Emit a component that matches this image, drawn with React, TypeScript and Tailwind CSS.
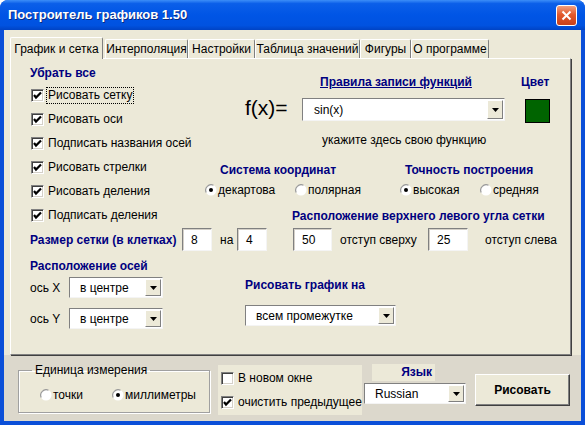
import React from "react";

const font = "font-['Liberation_Sans',Arial,sans-serif]";

function CheckBox({ label, checked, focus }: { label: string; checked?: boolean; focus?: boolean }) {
  return (
    <div className="flex items-center h-[24px] text-[12px] text-black whitespace-nowrap">
      <span className="w-[13px] h-[13px] bg-white border border-t-[#808080] border-l-[#808080] border-r-white border-b-white shadow-[inset_1px_1px_0_#404040,inset_-1px_-1px_0_#d4d0c8] flex items-center justify-center shrink-0">
        {checked && (
          <svg width="9" height="9" viewBox="0 0 9 9">
            <path d="M1 4 L3 6.5 L8 1.5" stroke="#000" strokeWidth="2.2" fill="none" />
          </svg>
        )}
      </span>
      <span className={`ml-[2px] leading-[15px] px-[1px] ${focus ? "border border-dotted border-black" : "border border-transparent"}`}>
        {label}
      </span>
    </div>
  );
}

function Radio({ label, checked, w }: { label: string; checked?: boolean; w: string }) {
  return (
    <div className={`flex items-center h-[16px] text-[12px] whitespace-nowrap ${w}`}>
      <svg width="12" height="12" viewBox="0 0 12 12" className="shrink-0">
        <circle cx="6" cy="6" r="5.5" fill="#fff" />
        <path d="M1.2 8.5 A5.5 5.5 0 0 1 8.5 1.2" stroke="#9a9a9a" strokeWidth="1.2" fill="none" />
        {checked && <circle cx="6" cy="6" r="2" fill="#000" />}
      </svg>
      <span className="ml-[1px]">{label}</span>
    </div>
  );
}

function Field({ value, w }: { value: string; w: string }) {
  return (
    <div className={`h-[23px] ${w} bg-white border border-t-[#808080] border-l-[#808080] border-r-[#f4f4f4] border-b-[#f4f4f4] shadow-[inset_1px_1px_0_#d4d0c8] flex items-center pl-[8px] text-[12px]`}>
      {value}
    </div>
  );
}

function Combo({ value, w, h = "h-[21px]", pl = "pl-[10px]" }: { value: string; w: string; h?: string; pl?: string }) {
  return (
    <div className={`${h} ${w} bg-white border border-t-[#808080] border-l-[#808080] border-r-[#f4f4f4] border-b-[#f4f4f4] flex items-stretch text-[12px]`}>
      <div className={`flex-1 flex items-center whitespace-nowrap ${pl}`}>{value}</div>
      <div className="w-[16px] m-[1px] bg-[#ece9d8] border border-t-white border-l-white border-r-[#808080] border-b-[#808080] flex items-center justify-center">
        <svg width="7" height="4" viewBox="0 0 7 4">
          <path d="M0 0 H7 L3.5 4 Z" fill="#000" />
        </svg>
      </div>
    </div>
  );
}

function Heading({ children, className = "" }: { children: React.ReactNode; className?: string }) {
  return <div className={`h-[16px] leading-[16px] text-[12px] font-bold text-[#000080] whitespace-nowrap ${className}`}>{children}</div>;
}

const tabs = [
  { label: "График и сетка", w: "w-[93px]", active: true },
  { label: "Интерполяция", w: "w-[83px]" },
  { label: "Настройки", w: "w-[67px]" },
  { label: "Таблица значений", w: "w-[105px]" },
  { label: "Фигуры", w: "w-[51px]" },
  { label: "О программе", w: "w-[78px]" },
];

export default function App() {
  return (
    <div className={`w-[585px] h-[425px] bg-[#0b4fd8] rounded-t-[8px] flex flex-col overflow-hidden ${font}`}>
      {/* title bar */}
      <div className="h-[30px] shrink-0 flex items-center justify-between pl-[8px] pr-[8px] bg-[linear-gradient(180deg,#3c8ef8_0%,#0b5fe9_12%,#0055e5_50%,#0052e0_85%,#0043c4_100%)]">
        <span className="text-white font-bold text-[13px] [text-shadow:1px_1px_0_#0a2a80]">Построитель графиков 1.50</span>
        <div className="w-[21px] h-[21px] rounded-[3px] border border-white bg-[linear-gradient(180deg,#f0a080_0%,#e2592c_45%,#c8401a_100%)] flex items-center justify-center">
          <svg width="11" height="11" viewBox="0 0 11 11">
            <path d="M1.5 1.5 L9.5 9.5 M9.5 1.5 L1.5 9.5" stroke="#fff" strokeWidth="2" />
          </svg>
        </div>
      </div>

      {/* body */}
      <div className="flex-1 min-h-0 mx-[4px] mb-[4px] bg-[#dcd8cc] flex flex-col">
        <div className="bg-[#ece9d8] pt-[7px] pl-[6px]">
          <div className="flex items-end h-[21px] pl-[2px]">
            {tabs.map((t) => (
              <div
                key={t.label}
                className={`${t.w} flex items-center justify-center text-[12px] whitespace-nowrap border-t border-l border-t-white border-l-white border-r border-r-[#808080] rounded-t-[2px] ${
                  t.active ? "h-[22px] -mb-px bg-[#ece9d8] relative z-10 -ml-[2px] mr-[2px]" : "h-[19px] bg-[#ece9d8]"
                }`}
              >
                {t.label}
              </div>
            ))}
          </div>
        </div>

        {/* tab panel */}
        <div className="bg-[#ece9d8] pl-[6px] pr-[10px]">
          <div className="h-[297px] bg-[#ece9d8] border border-t-white border-l-white border-r-[#808080] border-b-[#808080] shadow-[1px_1px_0_#404040] pl-[19px] pt-[6px]">
            {/* top section */}
            <div className="h-[163px] flex">
              <div className="w-[175px]">
                <Heading>Убрать все</Heading>
                <div className="mt-[2px] pl-[1px]">
                  <CheckBox label="Рисовать сетку" checked focus />
                  <CheckBox label="Рисовать оси" checked />
                  <CheckBox label="Подписать названия осей" checked />
                  <CheckBox label="Рисовать стрелки" checked />
                  <CheckBox label="Рисовать деления" checked />
                  <CheckBox label="Подписать деления" checked />
                </div>
              </div>

              <div className="flex-1 flex flex-col">
                <div className="flex">
                  <div className="ml-[40px] w-[57px] pt-[31px] text-[21px] leading-[24px]">f(x)=</div>
                  <div className="w-[203px] pt-[9px]">
                    <Heading className="pl-[18px] underline">Правила записи функций</Heading>
                    <div className="mt-[8px]">
                      <Combo value="sin(x)" w="w-[203px]" h="h-[23px]" pl="pl-[11px]" />
                    </div>
                    <div className="mt-[11px] pl-[20px] h-[16px] leading-[16px] text-[12px]">укажите здесь свою функцию</div>
                  </div>
                  <div className="ml-[16px] pt-[9px]">
                    <Heading>Цвет</Heading>
                    <div className="mt-[9px] ml-[4px] w-[25px] h-[24px] bg-[#006400] border border-black" />
                  </div>
                </div>

                <div className="flex mt-[14px]">
                  <div className="w-[195px]">
                    <Heading className="pl-[15px]">Система координат</Heading>
                    <div className="flex mt-[4px]">
                      <Radio label="декартова" checked w="w-[90px]" />
                      <Radio label="полярная" w="w-[90px]" />
                    </div>
                  </div>
                  <div>
                    <Heading className="pl-[5px]">Точность построения</Heading>
                    <div className="flex mt-[4px]">
                      <Radio label="высокая" checked w="w-[80px]" />
                      <Radio label="средняя" w="w-[80px]" />
                    </div>
                  </div>
                </div>

                <Heading className="mt-[10px] pl-[87px]">Расположение верхнего левого угла сетки</Heading>
              </div>
            </div>

            {/* grid size row */}
            <div className="flex items-center h-[23px] text-[12px] whitespace-nowrap">
              <div className="w-[152px] font-bold text-[#000080]">Размер сетки (в клетках)</div>
              <Field value="8" w="w-[30px]" />
              <div className="w-[25px] pl-[8px]">на</div>
              <Field value="4" w="w-[30px]" />
              <div className="w-[26px]" />
              <Field value="50" w="w-[39px]" />
              <div className="w-[96px] pl-[8px]">отступ сверху</div>
              <Field value="25" w="w-[40px]" />
              <div className="pl-[17px]">отступ слева</div>
            </div>

            {/* axes */}
            <div className="flex mt-[7px]">
              <div className="w-[215px]">
                <Heading>Расположение осей</Heading>
                <div className="flex items-center mt-[3px] text-[12px]">
                  <div className="w-[39px]">ось X</div>
                  <Combo value="в центре" w="w-[94px]" />
                </div>
                <div className="flex items-center mt-[10px] text-[12px]">
                  <div className="w-[39px]">ось Y</div>
                  <Combo value="в центре" w="w-[94px]" />
                </div>
              </div>
              <div className="pt-[19px]">
                <Heading>Рисовать график на</Heading>
                <div className="mt-[12px]">
                  <Combo value="всем промежутке" w="w-[151px]" />
                </div>
              </div>
            </div>
          </div>
        </div>

        {/* bottom strip */}
        <div className="flex-1 flex items-start text-[12px]">
          <fieldset className="ml-[14px] mt-[8px] w-[192px] min-w-0 shrink-0 h-[50px] border border-[#a0a0a0] shadow-[1px_1px_0_#fff,inset_1px_1px_0_#fff] bg-[#ece9d8] pl-[21px] pr-0">
            <legend className="ml-[-8px] px-[3px] leading-[14px]">Единица измерения</legend>
            <div className="flex mt-[10px]">
              <Radio label="точки" w="w-[72px]" />
              <Radio label="миллиметры" checked w="w-[90px]" />
            </div>
          </fieldset>

          <div className="ml-[8px] mt-[10px] w-[144px] shrink-0 h-[50px] bg-[#ece9d8] pl-[3px] pt-[1px]">
            <CheckBox label="В новом окне" />
            <CheckBox label="очистить предыдущее" checked />
          </div>

          <div className="ml-[2px] mt-[9px] w-[102px] shrink-0">
            <div className="ml-[8px] w-[63px] h-[17px] bg-[#ece9d8] text-right pr-[3px] text-[12px] font-bold text-[#000080] leading-[17px]">Язык</div>
            <div className="mt-[2px]">
              <Combo value="Russian" w="w-[102px]" />
            </div>
          </div>

          <div className="ml-[9px] mt-[19px] w-[95px] shrink-0 h-[32px] bg-[#ece9d8] border border-t-white border-l-white border-r-[#404040] border-b-[#404040] shadow-[inset_-1px_-1px_0_#808080] flex items-center justify-center font-bold text-[12px]">
            Рисовать
          </div>
        </div>
      </div>
    </div>
  );
}
